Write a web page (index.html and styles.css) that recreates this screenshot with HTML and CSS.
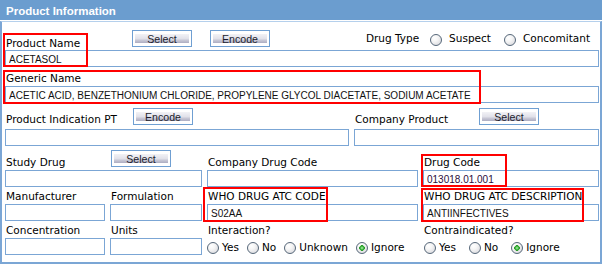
FILE: index.html
```html
<!DOCTYPE html>
<html>
<head>
  <meta charset="utf-8">
  <link rel="stylesheet" href="styles.css">
  <title>Product Information</title>
</head>
<body>
  <div class="panel-title">Product Information</div>
  <div class="panel">

    <div class="row row-name">
      <div class="field span-all">
        <div class="head">
          <label class="label w-name">Product Name</label>
          <button class="btn">Select</button>
          <button class="btn btn-next">Encode</button>
          <div class="choice drug-type">
            <span class="choice-title">Drug Type</span>
            <label class="opt"><input type="radio" class="radio" name="drugtype"><span>Suspect</span></label>
            <label class="opt"><input type="radio" class="radio" name="drugtype"><span>Concomitant</span></label>
          </div>
        </div>
        <input class="text" type="text" value="ACETASOL">
        <span class="mark mark-name"></span>
      </div>
    </div>

    <div class="row row-generic">
      <div class="field span-all">
        <div class="head"><label class="label">Generic Name</label></div>
        <input class="text" type="text" value="ACETIC ACID, BENZETHONIUM CHLORIDE, PROPYLENE GLYCOL DIACETATE, SODIUM ACETATE">
        <span class="mark mark-generic"></span>
      </div>
    </div>

    <div class="row row-indication">
      <div class="field span-abc">
        <div class="head">
          <label class="label w-indication">Product Indication PT</label>
          <button class="btn">Encode</button>
        </div>
        <input class="text" type="text">
      </div>
      <div class="field span-de">
        <div class="head">
          <label class="label w-company">Company Product</label>
          <button class="btn">Select</button>
        </div>
        <input class="text" type="text">
      </div>
    </div>

    <div class="row row-study">
      <div class="field span-ab">
        <div class="head">
          <label class="label w-study">Study Drug</label>
          <button class="btn">Select</button>
        </div>
        <input class="text" type="text">
      </div>
      <div class="field span-cd">
        <div class="head"><label class="label">Company Drug Code</label></div>
        <input class="text" type="text">
      </div>
      <div class="field">
        <div class="head"><label class="label">Drug Code</label></div>
        <input class="text text-code" type="text" value="013018.01.001">
        <span class="mark mark-code"></span>
      </div>
    </div>

    <div class="row row-who">
      <div class="field">
        <div class="head"><label class="label">Manufacturer</label></div>
        <input class="text" type="text">
      </div>
      <div class="field">
        <div class="head"><label class="label">Formulation</label></div>
        <input class="text" type="text">
      </div>
      <div class="field span-cd">
        <div class="head"><label class="label">WHO DRUG ATC CODE</label></div>
        <input class="text" type="text" value="S02AA">
        <span class="mark mark-atc"></span>
      </div>
      <div class="field">
        <div class="head"><label class="label">WHO DRUG ATC DESCRIPTION</label></div>
        <input class="text" type="text" value="ANTIINFECTIVES">
        <span class="mark mark-atc-desc"></span>
      </div>
    </div>

    <div class="row row-misc">
      <div class="field">
        <div class="head"><label class="label">Concentration</label></div>
        <input class="text" type="text">
      </div>
      <div class="field">
        <div class="head"><label class="label">Units</label></div>
        <input class="text" type="text">
      </div>
      <div class="field span-cd">
        <div class="head"><label class="label">Interaction?</label></div>
        <div class="choice choice-row interaction">
          <label class="opt"><input type="radio" class="radio" name="interaction"><span>Yes</span></label>
          <label class="opt"><input type="radio" class="radio" name="interaction"><span>No</span></label>
          <label class="opt"><input type="radio" class="radio" name="interaction"><span>Unknown</span></label>
          <label class="opt"><input type="radio" class="radio" name="interaction" checked><span>Ignore</span></label>
        </div>
      </div>
      <div class="field">
        <div class="head"><label class="label">Contraindicated?</label></div>
        <div class="choice choice-row contra">
          <label class="opt"><input type="radio" class="radio" name="contra"><span>Yes</span></label>
          <label class="opt"><input type="radio" class="radio" name="contra"><span>No</span></label>
          <label class="opt"><input type="radio" class="radio" name="contra" checked><span>Ignore</span></label>
        </div>
      </div>
    </div>

  </div>
</body>
</html>
```

FILE: styles.css
```css
html, body { margin: 0; padding: 0; background: #fff; }
body { width: 602px; }

.panel-title {
  height: 20px;
  box-sizing: border-box;
  padding: 2px 0 0 6px;
  margin-bottom: 1px;
  background: #6b9dcf;
  color: #fff;
  font: bold 11.5px "Liberation Sans", Arial, sans-serif;
  line-height: 18px;
}

.panel {
  box-sizing: border-box;
  width: 602px;
  border: 2px solid #7ba6d5;
  border-top: 1px solid #b5d0ec;
  padding: 8px 1px 7px 3px;
}

/* every row uses the same five columns */
.row {
  display: grid;
  grid-template-columns: 100px 92px 142px 64px 176px;
  column-gap: 5px;
}
.span-all { grid-column: 1 / -1; }
.span-abc { grid-column: 1 / 4; }
.span-de  { grid-column: 4 / 6; }
.span-ab  { grid-column: 1 / 3; }
.span-cd  { grid-column: 3 / 5; }

.field {
  position: relative;
  display: flex;
  flex-direction: column;
}

.head {
  display: flex;
  align-items: flex-end;
  height: 17px;
}
.row-name .head { height: 20px; }
.row-generic .head { height: 19px; }
.row-indication .head { height: 26px; }
.row-study .head { height: 24px; }

.label {
  display: block;
  padding-left: 1px;
  margin-bottom: 1px;
  color: #000;
  font: 10.5px "DejaVu Sans", "Liberation Sans", sans-serif;
  line-height: 13px;
  white-space: nowrap;
}
.row-name .label { margin-bottom: 0; }
.row-indication .label { margin-bottom: 3px; }

.w-name { width: 126px; }
.w-indication { width: 127px; }
.w-company { width: 124px; }
.w-study { width: 105px; }

.text {
  display: block;
  width: 100%;
  height: 17px;
  box-sizing: border-box;
  margin: 0;
  padding: 2px 3px 0;
  border: 1px solid #7ba6d5;
  border-radius: 0;
  background: #fff;
  color: #111;
  font: 10px "Liberation Sans", Arial, sans-serif;
  outline: none;
}
.text-code { color: #2c0d3c; }

.btn {
  flex: none;
  width: 60px;
  height: 17px;
  box-sizing: border-box;
  margin: 0 0 3px;
  padding: 2px 0 0;
  border: 1px solid #6f9fd2;
  border-radius: 0;
  background: #fff linear-gradient(to bottom, #f2f2f6 0%, #e2e2ea 50%, #c6c6d4 72%, #adadc2 100%) 2px 3px / 54px 9px no-repeat;
  color: #1c1c2c;
  font: 10.6px "Liberation Sans", Arial, sans-serif;
  line-height: 13px;
  text-align: center;
}
.btn-next { margin-left: 18px; }
.row-indication .btn { margin-bottom: 4px; }

/* radio groups */
.choice {
  display: flex;
  align-items: center;
  color: #000;
  font: 10.5px "DejaVu Sans", "Liberation Sans", sans-serif;
  line-height: 13px;
  white-space: nowrap;
}
.opt {
  display: flex;
  align-items: center;
  gap: 3px;
}

.radio {
  -webkit-appearance: none;
  appearance: none;
  flex: none;
  width: 12px;
  height: 12px;
  margin: 0;
  border: 1px solid #566779;
  border-radius: 50%;
  background: radial-gradient(circle at 35% 30%, #fff 0, #f6f6f6 35%, #d2d2d8 100%);
}
.radio:checked {
  background:
    radial-gradient(circle, #c8f5c8 0, #4cc04c 1.3px, #2a9a2a 2.6px, rgba(42, 154, 42, 0) 3px),
    radial-gradient(circle at 35% 30%, #fff 0, #f6f6f6 35%, #d2d2d8 100%);
}

.drug-type {
  margin: 0 9px 4px auto;
  height: 12px;
}
.drug-type .opt { gap: 7px; margin-left: 13px; }
.drug-type .opt:first-of-type { margin-left: 11px; }
.drug-type span { margin-bottom: 3px; }

.choice-row {
  height: 17px;
  box-sizing: border-box;
  padding-top: 2px;
}
.interaction .opt { margin-right: 8px; }
.contra { padding-left: 1px; }
.contra .opt { margin-right: 13px; }

/* red review markers drawn over the fields */
.mark {
  position: absolute;
  box-sizing: border-box;
  border: 2px solid #f00;
  pointer-events: none;
}
.mark-name { left: -2px; top: 3px; bottom: 0; width: 85px; }
.mark-generic { left: -2px; top: 3px; bottom: -1px; width: 478px; }
.mark-code { left: -2px; top: 8px; bottom: 0; width: 86px; }
.mark-atc { left: -4px; top: 0; bottom: -1px; width: 125px; }
.mark-atc-desc { left: -2px; top: 1px; bottom: -1px; width: 163px; }
```
